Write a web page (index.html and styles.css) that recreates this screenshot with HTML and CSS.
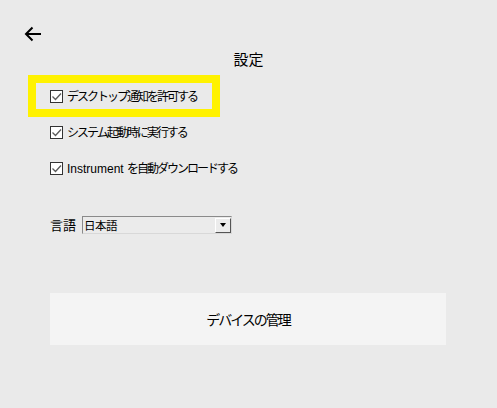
FILE: index.html
```html
<!DOCTYPE html>
<html lang="ja">
<head>
    <meta charset="UTF-8">
    <title>設定</title>
    <link rel="stylesheet" href="styles.css">
</head>
<body>
    <div class="page">
        <div class="header">
            <button class="back" aria-label="戻る">
                <svg width="18" height="16" viewBox="0 0 18 16">
                    <path d="M17 8H2M8.5 1.5L2 8l6.5 6.5" fill="none" stroke="#000" stroke-width="2"/>
                </svg>
            </button>
        </div>
        <h1 class="title">設定</h1>

        <div class="options">
            <label class="option focused">
                <span class="check"><svg width="11" height="11" viewBox="0 0 11 11"><path d="M1.5 5.5l3 3 5.5-6" fill="none" stroke="#5a5a5a" stroke-width="1.3"/></svg></span>
                <span class="label">デスクトップ通知を許可する</span>
            </label>
            <label class="option">
                <span class="check"><svg width="11" height="11" viewBox="0 0 11 11"><path d="M1.5 5.5l3 3 5.5-6" fill="none" stroke="#5a5a5a" stroke-width="1.3"/></svg></span>
                <span class="label">システム起動時に実行する</span>
            </label>
            <label class="option">
                <span class="check"><svg width="11" height="11" viewBox="0 0 11 11"><path d="M1.5 5.5l3 3 5.5-6" fill="none" stroke="#5a5a5a" stroke-width="1.3"/></svg></span>
                <span class="label"><span class="latin">Instrument </span>を自動ダウンロードする</span>
            </label>
        </div>

        <div class="lang">
            <span class="lang-label">言語</span>
            <div class="select">
                <span class="select-value">日本語</span>
                <span class="select-btn"><span class="tri"></span></span>
            </div>
        </div>

        <button class="manage">デバイスの管理</button>
    </div>
</body>
</html>
```

FILE: styles.css
```css
body {
    margin: 0;
    background: #eaeaea;
    font-family: "Noto Sans CJK JP", "Noto Sans", sans-serif;
    color: #000;
}
.page {
    width: 497px;
    height: 408px;
}
.header {
    padding: 26px 0 0 24px;
    height: 18px;
}
.back {
    background: none;
    border: none;
    padding: 0;
    display: block;
}
.title {
    margin: 5px 0 0;
    text-align: center;
    font-size: 15px;
    font-weight: normal;
    line-height: 20px;
}
.options {
    margin-top: 14px;
    display: flex;
    flex-direction: column;
    align-items: flex-start;
    gap: 10px;
}
.option {
    margin-left: 36px;
    width: 176px;
    height: 26px;
    padding-left: 14px;
    box-sizing: border-box;
    display: flex;
    align-items: center;
    white-space: nowrap;
}
.option.focused {
    outline: 8px solid #fff200;
}
.check {
    width: 11px;
    height: 11px;
    border: 1px solid #333;
    background: #fff;
    display: flex;
    margin-right: 4px;
}
.label {
    font-size: 12px;
    letter-spacing: -2px;
    line-height: 14px;
}
.latin {
    font-family: "Liberation Sans", sans-serif;
    letter-spacing: 0;
}
.lang {
    margin: 34px 0 0 50px;
    display: flex;
    align-items: center;
}
.lang-label {
    font-size: 13px;
    margin-right: 6px;
}
.select {
    position: relative;
    width: 150px;
    height: 18px;
    box-sizing: border-box;
    border: 1px solid #8a8a8a;
    border-right-color: #d8d8d8;
    border-bottom-color: #d8d8d8;
    background: #ebebeb;
    display: flex;
    align-items: center;
}
.select-value {
    font-size: 11.5px;
    padding-left: 1px;
    letter-spacing: -0.5px;
}
.select-btn {
    position: absolute;
    right: 0;
    top: 1px;
    width: 16px;
    height: 15px;
    box-sizing: border-box;
    background: #ececec;
    border: 1px solid #fff;
    border-right-color: #555;
    border-bottom-color: #555;
    display: flex;
    align-items: center;
    justify-content: center;
}
.tri {
    width: 0;
    height: 0;
    border-left: 3.5px solid transparent;
    border-right: 3.5px solid transparent;
    border-top: 4px solid #000;
}
.manage {
    display: block;
    margin: 59px 0 0 50px;
    width: 396px;
    height: 52px;
    border: none;
    background: #f4f4f4;
    font-family: inherit;
    font-size: 14px;
    letter-spacing: -2px;
    color: #000;
}
```
